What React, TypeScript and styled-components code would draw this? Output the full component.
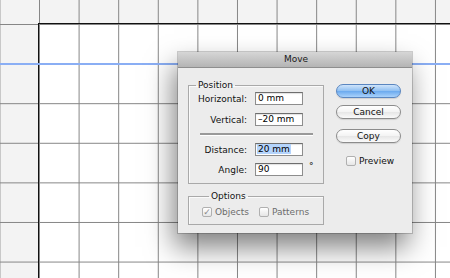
import React from "react";
import styled, { createGlobalStyle } from "styled-components";

const GlobalStyle = createGlobalStyle`
    html, body {
        margin: 0;
        padding: 0;
        width: 450px;
        height: 278px;
        overflow: hidden;
    }
    body {
        font-family: "DejaVu Sans", "Liberation Sans", sans-serif;
    }
`;

const grid = `
    linear-gradient(to right, #858585 1px, transparent 1px),
    linear-gradient(to bottom, #858585 1px, transparent 1px)
`;

export default function App() {
    return (
        <>
            <GlobalStyle />
            <Pasteboard>
                <Artboard />
                <Guide />
                <Dialog>
                    <TitleBar>Move</TitleBar>
                    <Body>
                        <LeftColumn>
                            <Group>
                                <Legend>Position</Legend>
                                <Row>
                                    <Label>Horizontal:</Label>
                                    <Field>0 mm</Field>
                                </Row>
                                <Row $gap={8}>
                                    <Label>Vertical:</Label>
                                    <Field>–20 mm</Field>
                                </Row>
                                <Separator />
                                <Row $gap={0}>
                                    <Label>Distance:</Label>
                                    <Field>
                                        <Selected>20 mm</Selected>
                                    </Field>
                                </Row>
                                <Row $gap={7}>
                                    <Label>Angle:</Label>
                                    <Field>90</Field>
                                    <Degree>°</Degree>
                                </Row>
                            </Group>
                            <Group $small>
                                <Legend>Options</Legend>
                                <Checks>
                                    <Check $disabled>
                                        <Box $checked>✓</Box>
                                        Objects
                                    </Check>
                                    <Check $disabled>
                                        <Box />
                                        Patterns
                                    </Check>
                                </Checks>
                            </Group>
                        </LeftColumn>
                        <Buttons>
                            <Button $primary>OK</Button>
                            <Button>Cancel</Button>
                            <Button $spaced>Copy</Button>
                            <Check $preview>
                                <Box />
                                Preview
                            </Check>
                        </Buttons>
                    </Body>
                </Dialog>
            </Pasteboard>
        </>
    );
}

const Pasteboard = styled.div`
    position: relative;
    width: 450px;
    height: 278px;
    box-sizing: border-box;
    padding: 23px 0 0 38px;
    display: flex;
    background-color: #f3f3f3;
    background-image: ${grid};
    background-size: 39.6px 39.6px;
    background-position: 39px 24px;
    overflow: hidden;
`;

const Artboard = styled.div`
    flex: 1;
    border-top: 1px solid #111;
    border-left: 1px solid #111;
    background-color: #fff;
    background-image: ${grid};
    background-size: 39.6px 39.6px;
`;

const Guide = styled.div`
    position: absolute;
    z-index: 1;
    left: 0;
    width: 450px;
    top: 63px;
    height: 2px;
    background: #8aaef4;
`;

const Dialog = styled.div`
    position: absolute;
    z-index: 2;
    left: 178px;
    top: 52px;
    width: 234px;
    height: 181px;
    display: flex;
    flex-direction: column;
    background: #ececec;
    box-shadow: 0 0 0 1px rgba(0, 0, 0, 0.18), -4px 14px 26px rgba(0, 0, 0, 0.5);
`;

const TitleBar = styled.div`
    height: 15px;
    line-height: 15px;
    text-align: center;
    font-size: 9px;
    color: #1a1a1a;
    background: linear-gradient(#d6d6d6, #b4b4b4);
    border-bottom: 1px solid #8e8e8e;
    padding-left: 2px;
`;

const Body = styled.div`
    display: flex;
    gap: 12px;
    padding: 12px 11px 0 10px;
`;

const LeftColumn = styled.div`
    display: flex;
    flex-direction: column;
    gap: 7px;
    width: 136px;
`;

const Group = styled.fieldset<{ $small?: boolean }>`
    margin: 0;
    padding: ${(p) => (p.$small ? "5px 0 7px 13px" : "2px 0 7px 0")};
    border: 1px solid #a9a9a9;
    box-shadow: inset 1px 1px 0 #fafafa;
    min-width: 0;
`;

const Legend = styled.legend`
    font-size: 9px;
    line-height: 10px;
    padding: 0 2px;
    margin-left: 7px;
    color: #111;
`;

const Row = styled.div<{ $gap?: number }>`
    display: flex;
    align-items: center;
    height: 13px;
    margin-top: ${(p) => p.$gap ?? 0}px;
`;

const Label = styled.span`
    width: 58px;
    text-align: right;
    font-size: 9px;
    color: #111;
    margin-right: 8px;
`;

const Field = styled.div`
    width: 48px;
    height: 13px;
    box-sizing: border-box;
    border: 1px solid #8d8d8d;
    border-top-color: #6e6e6e;
    background: #fff;
    box-shadow: inset 0 1px 1px rgba(0, 0, 0, 0.12);
    font-size: 9px;
    line-height: 11px;
    padding-left: 2px;
    color: #000;
    white-space: nowrap;
`;

const Selected = styled.span`
    background: #b4d4fc;
    margin-left: -1px;
    padding: 0 1px;
`;

const Degree = styled.span`
    font-size: 9px;
    margin-left: 6px;
    align-self: flex-start;
    margin-top: -2px;
`;

const Separator = styled.div`
    height: 2px;
    margin: 7px 10px 8px 11px;
    background: #999;
    box-shadow: 0 1px 0 #fff;
`;

const Checks = styled.div`
    display: flex;
    gap: 10px;
    margin-top: 1px;
`;

const Check = styled.label<{ $disabled?: boolean; $preview?: boolean }>`
    display: flex;
    align-items: center;
    gap: 3px;
    font-size: 9px;
    line-height: 10px;
    color: ${(p) => (p.$disabled ? "#6d6d6d" : "#111")};
    margin: ${(p) => (p.$preview ? "6px 0 0 10px" : "0")};
`;

const Box = styled.span<{ $checked?: boolean }>`
    width: 10px;
    height: 10px;
    box-sizing: border-box;
    border: 1px solid #b0b0b0;
    border-radius: 2px;
    background: linear-gradient(#ffffff, #e6e6e6);
    font-size: 9px;
    line-height: 8px;
    text-align: center;
    color: #8a8a8a;
`;

const Buttons = styled.div`
    display: flex;
    flex-direction: column;
    gap: 7px;
    width: 65px;
    padding-top: 4px;
`;

const Button = styled.button<{ $primary?: boolean; $spaced?: boolean }>`
    height: 14px;
    width: 65px;
    padding: 0;
    margin-top: ${(p) => (p.$spaced ? "3px" : "0")};
    border-radius: 7px;
    border: 1px solid ${(p) => (p.$primary ? "#5a86c0" : "#8c8c8c")};
    background: ${(p) =>
        p.$primary
            ? "linear-gradient(#cfe4fb 0%, #8ebff2 50%, #6aa9ee 51%, #a9d2fb 100%)"
            : "linear-gradient(#ffffff 0%, #f3f3f3 50%, #e6e6e6 51%, #fafafa 100%)"};
    font-family: "DejaVu Sans", "Liberation Sans", sans-serif;
    font-size: 9px;
    line-height: 12px;
    color: #111;
    box-shadow: 0 1px 1px rgba(0, 0, 0, 0.12);
`;
